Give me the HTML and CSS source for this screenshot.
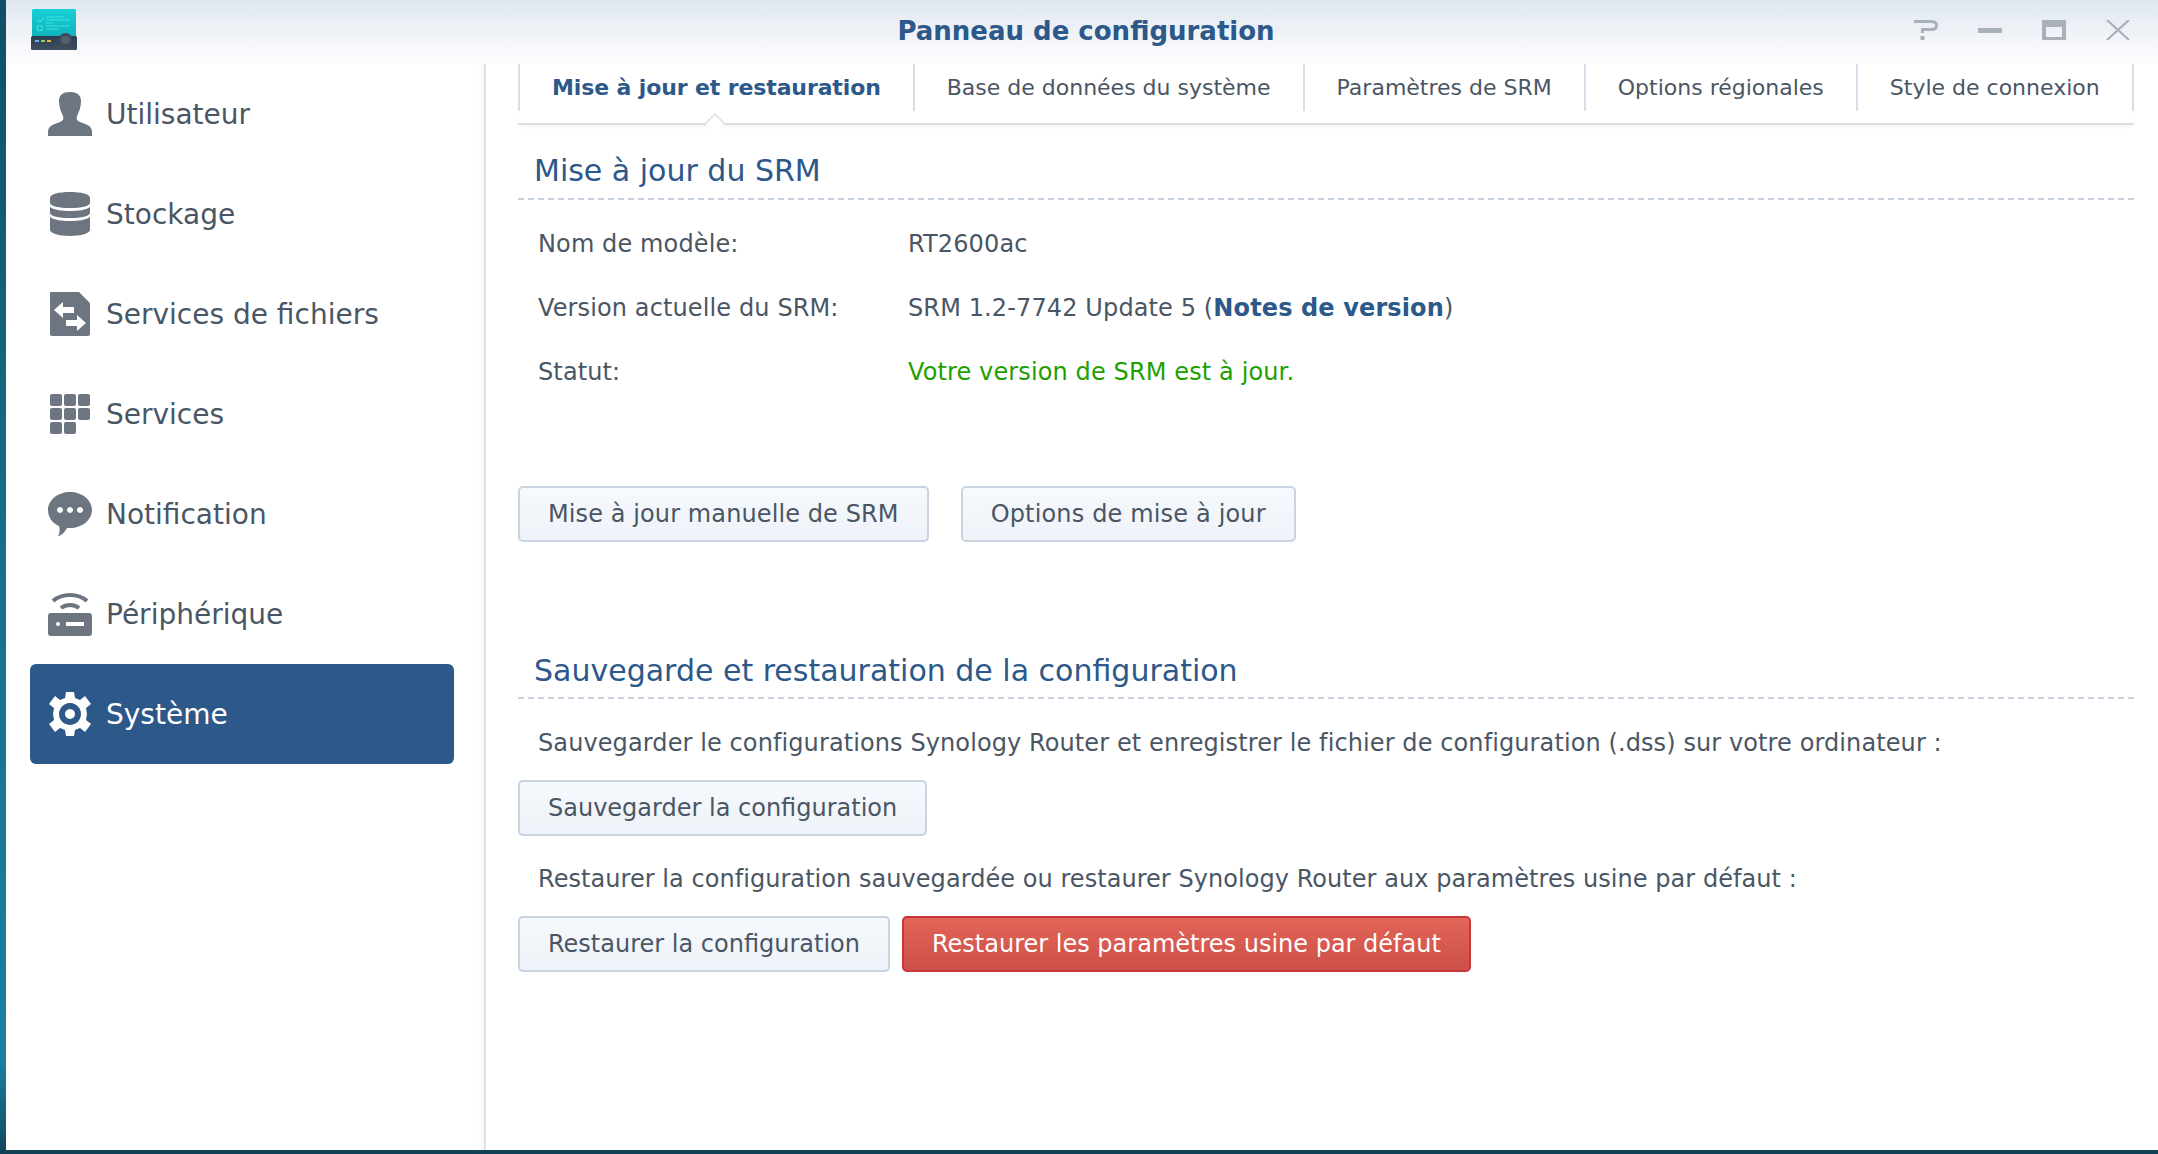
FILE: index.html
```html
<!DOCTYPE html>
<html lang="fr">
<head>
<meta charset="utf-8">
<title>Panneau de configuration</title>
<link rel="stylesheet" href="styles.css">
</head>
<body>
<div class="window">
  <header class="titlebar">
    <svg class="logo" viewBox="0 0 46 41" width="46" height="41">
      <defs>
        <linearGradient id="lg" x1="0" y1="0" x2="0" y2="1"><stop offset="0" stop-color="#17d0d6"/><stop offset="1" stop-color="#12b3bd"/></linearGradient>
        <linearGradient id="lb" x1="0" y1="0" x2="0" y2="1"><stop offset="0" stop-color="#2d3d50"/><stop offset="1" stop-color="#3e4f60"/></linearGradient>
      </defs>
      <path d="M1 1.5Q1 0 2.5 0H43.5Q45 0 45 1.5V28H1Z" fill="url(#lg)"/>
      <rect x="0" y="27" width="46" height="14" rx="1.5" fill="url(#lb)"/>
      <path d="M7 11l2 2 4-4" fill="none" stroke="#38e6dc" stroke-width="1.2"/>
      <rect x="6.5" y="17" width="4.5" height="4.5" fill="none" stroke="#38e6dc" stroke-width="1"/>
      <path d="M15 8H32M15 11H39M15 14H22M15 17H39M15 20H27" stroke="#38e6dc" stroke-width="1"/>
      <rect x="4" y="31" width="4" height="2" fill="#5bb6ec"/><rect x="10" y="31" width="4" height="2" fill="#9ccc4a"/><rect x="16" y="31" width="4" height="2" fill="#e3b64b"/>
      <circle cx="34.500" cy="31" r="7" fill="#3f4c5b"/><circle cx="34.500" cy="31" r="4" fill="#56626f"/>
    </svg>
    <h1 class="wintitle">Panneau de configuration</h1>
    <div class="winbtns">
      <svg class="winbtn" viewBox="0 0 24 20" width="24" height="20"><path d="M0 1.500H17Q22.500 1.500 22.500 5.500T17 9.500H8.500V13" fill="none" stroke="#a8b0b9" stroke-width="3"/><rect x="6.500" y="16" width="4" height="4" fill="#a8b0b9"/></svg>
      <svg class="winbtn" viewBox="0 0 24 20" width="24" height="20"><rect x="0" y="8" width="24" height="5" fill="#a8b0b9"/></svg>
      <svg class="winbtn" viewBox="0 0 24 20" width="24" height="20"><path fill-rule="evenodd" d="M0 0H24V20H0ZM4 7V17H20V7Z" fill="#a8b0b9"/></svg>
      <svg class="winbtn" viewBox="0 0 24 20" width="24" height="20"><path d="M1 0L23 20M23 0L1 20" stroke="#a8b0b9" stroke-width="2.200"/></svg>
    </div>
  </header>
  <div class="main">
    <nav class="sidebar">
      <a class="navitem">
        <svg class="navicon" viewBox="0 0 44 44"><path d="M22 0c7 0 11 3 11 9 0 6-2 11-4 15-1 3 0 5 3 6 5 2 12 3 12 10v4H0v-4c0-7 7-8 12-10 3-1 4-3 3-6-2-4-4-9-4-15C11 3 15 0 22 0Z"/></svg>
        <span>Utilisateur</span>
      </a>
      <a class="navitem">
        <svg class="navicon" viewBox="0 0 44 44"><path d="M2 6c0-4 9-6 20-6s20 2 20 6v5c0 3-9 5-20 5S2 14 2 11Z"/><path d="M2 15c4 3 12 4 20 4s16-1 20-4v6c0 3-9 5-20 5S2 24 2 21Z"/><path d="M2 25c4 3 12 4 20 4s16-1 20-4v13c0 3-9 6-20 6S2 41 2 38Z"/></svg>
        <span>Stockage</span>
      </a>
      <a class="navitem">
        <svg class="navicon" viewBox="0 0 44 44"><path fill-rule="evenodd" d="M3 0H31L42 11V42Q42 44 40 44H4Q2 44 2 42V1Q2 0 3 0ZM6 18L15 10V15H26V21H15V26ZM38 31L29 39V34H18V28H29V23Z"/></svg>
        <span>Services de fichiers</span>
      </a>
      <a class="navitem">
        <svg class="navicon" viewBox="0 0 44 44"><rect x="2" y="2" width="12" height="12" rx="2"/><rect x="16" y="2" width="12" height="12" rx="2"/><rect x="30" y="2" width="12" height="12" rx="2"/><rect x="2" y="16" width="12" height="12" rx="2"/><rect x="16" y="16" width="12" height="12" rx="2"/><rect x="30" y="16" width="12" height="12" rx="2"/><rect x="2" y="30" width="12" height="12" rx="2"/><rect x="16" y="30" width="12" height="12" rx="2"/></svg>
        <span>Services</span>
      </a>
      <a class="navitem">
        <svg class="navicon" viewBox="0 0 44 44"><path fill-rule="evenodd" d="M22 0C34 0 44 8 44 18S34 36 22 36H19C17 40 13 44 10 44 12 41 12 37 11 34 4 31 0 25 0 18 0 8 10 0 22 0ZM12 15a3 3 0 1 0 .01 0ZM22 15a3 3 0 1 0 .01 0ZM32 15a3 3 0 1 0 .01 0Z"/></svg>
        <span>Notification</span>
      </a>
      <a class="navitem">
        <svg class="navicon" viewBox="0 0 44 44"><path d="M5 9C14 1 30 1 39 9M13 16C18 12 26 12 31 16" fill="none" stroke-width="4"/><path fill-rule="evenodd" d="M3 21H41Q44 21 44 24V41Q44 44 41 44H3Q0 44 0 41V24Q0 21 3 21ZM10 30a2 2 0 1 0 .01 0ZM18 30H36V34H18Z"/></svg>
        <span>Périphérique</span>
      </a>
      <a class="navitem active">
        <svg class="navicon" viewBox="0 0 44 44"><path fill-rule="evenodd" d="M18 0H26L27 6 32 8 37 4 43 12 38 16 39 22 38 28 43 32 37 40 32 36 27 38 26 44H18L17 38 12 36 7 40 1 32 6 28 5 22 6 16 1 12 7 4 12 8 17 6ZM22 11A11 11 0 1 0 22.010 11ZM22 17A5 5 0 1 1 21.990 17Z"/></svg>
        <span>Système</span>
      </a>
    </nav>
    <main class="content">
      <div class="tabs">
        <div class="tab selected">Mise à jour et restauration</div>
        <div class="tab">Base de données du système</div>
        <div class="tab">Paramètres de SRM</div>
        <div class="tab">Options régionales</div>
        <div class="tab">Style de connexion</div>
      </div>
      <h2 class="section first">Mise à jour du SRM</h2>
      <dl class="info">
        <div class="row"><dt>Nom de modèle:</dt><dd>RT2600ac</dd></div>
        <div class="row"><dt>Version actuelle du SRM:</dt><dd>SRM 1.2-7742 Update 5 (<a class="link">Notes de version</a>)</dd></div>
        <div class="row"><dt>Statut:</dt><dd class="ok">Votre version de SRM est à jour.</dd></div>
      </dl>
      <div class="actions gap32">
        <button class="btn airy">Mise à jour manuelle de SRM</button>
        <button class="btn airier">Options de mise à jour</button>
      </div>
      <h2 class="section second">Sauvegarde et restauration de la configuration</h2>
      <p class="desc desc-save">Sauvegarder le configurations Synology Router et enregistrer le fichier de configuration (.dss) sur votre ordinateur :</p>
      <div class="actions"><button class="btn">Sauvegarder la configuration</button></div>
      <p class="desc">Restaurer la configuration sauvegardée ou restaurer Synology Router aux paramètres usine par défaut :</p>
      <div class="actions gap12">
        <button class="btn">Restaurer la configuration</button>
        <button class="btn danger">Restaurer les paramètres usine par défaut</button>
      </div>
    </main>
  </div>
</div>
</body>
</html>
```
FILE: styles.css
```css
* { box-sizing: border-box; }
html, body { margin: 0; height: 100%; }
body {
  background: linear-gradient(180deg, #0f4f66 0%, #17708c 50%, #1a7fa1 92%, #12566e 98%, #123f55 100%);
  font-family: "DejaVu Sans", Verdana, sans-serif;
  color: #4a5664;
  overflow: hidden;
}
.window {
  margin-left: 6px;
  height: 1150px;
  background: #fff;
  display: flex;
  flex-direction: column;
}
.titlebar {
  height: 64px;
  flex: none;
  display: flex;
  align-items: center;
  position: relative;
  background: linear-gradient(180deg, #e0e7f0 0%, #fdfdfe 100%);
}
.logo { position: absolute; left: 25px; top: 9px; }
.wintitle {
  margin: 0 auto;
  font-size: 26px;
  font-weight: bold;
  color: #2c588a;
  position: relative;
  left: 4px;
  top: -1px;
}
.winbtns {
  position: absolute;
  right: 28px;
  top: 20px;
  display: flex;
  gap: 40px;
}
.main { flex: 1; display: flex; min-height: 0; }
.sidebar {
  width: 480px;
  flex: none;
  padding: 0 30px 0 24px;
  border-right: 2px solid #e2e2e2;
  box-shadow: inset -8px 0 8px -8px #eee;
}
.navitem {
  height: 100px;
  display: flex;
  align-items: center;
  gap: 14px;
  padding-left: 18px;
  border-radius: 6px;
  font-size: 28px;
  color: #4a5664;
}
.navicon { width: 44px; height: 44px; fill: #6d7580; stroke: #6d7580; stroke-width: 0; flex: none; }
.navicon path[fill="none"] { stroke-width: 4; }
.active { background: #2c588a; color: #fff; }
.active .navicon { fill: #fff; }
.content { flex: 1; padding-right: 24px; padding-left: 32px; min-width: 0; }
.tabs {
  height: 61px;
  display: flex;
  padding-bottom: 12px;
  border-bottom: 2px solid #dcdee0;
  box-shadow: 0 3px 4px -2px #eee;
  position: relative;
}
.tab {
  border-left: 2px solid #d3dfeb;
  padding: 0 32px;
  display: flex;
  align-items: center;
  font-size: 22px;
  color: #4a5664;
  white-space: nowrap;
}
.tab:last-child { border-right: 2px solid #d3dfeb; }
.selected { font-weight: bold; color: #2c588a; position: relative; letter-spacing: -0.12px; }
.selected::after {
  content: "";
  position: absolute;
  left: 185px;
  top: 49px;
  width: 18px;
  height: 18px;
  background: #fff;
  border-left: 2px solid #dcdee0;
  border-top: 2px solid #dcdee0;
  transform: rotate(45deg) scale(.7);
}
.section {
  margin: 0;
  font-weight: normal;
  font-size: 30px;
  line-height: 40px;
  color: #2c588a;
  padding: 0 0 7px 16px;
  border-bottom: 2px dashed #c8d2de;
}
.section.first { margin-top: 26px; }
.section.second { margin-top: 109px; padding-bottom: 6px; }
.info { margin: 0; padding: 12px 0 0 20px; }
.row { display: flex; height: 64px; align-items: center; font-size: 24px; letter-spacing: 0.12px; }
.row dt { width: 370px; }
.row dd { margin: 0; }
.link { font-weight: bold; color: #2c588a; }
.ok { color: #1ea000; }
.actions { display: flex; }
.gap32 { gap: 32px; margin-top: 82px; }
.gap12 { gap: 12px; }
.btn {
  height: 56px;
  padding: 0 28px;
  border: 2px solid #c8d4e0;
  border-radius: 5px;
  background: linear-gradient(180deg, #f6f9fd, #eef3f9);
  font: inherit;
  font-size: 24px;
  color: #4a5664;
}
.airy { letter-spacing: 0.1px; }
.airier { letter-spacing: 0.16px; }
.danger {
  background: linear-gradient(180deg, #e36558, #cc4f48);
  border-color: #c8363a;
  color: #fff;
}
.desc {
  margin: 0;
  height: 80px;
  padding: 27px 0 0 20px;
  line-height: 32px;
  font-size: 24px;
  letter-spacing: 0.05px;
  white-space: nowrap;
}
.desc-save { height: 81px; padding-top: 28px; letter-spacing: 0.1px; }
```
